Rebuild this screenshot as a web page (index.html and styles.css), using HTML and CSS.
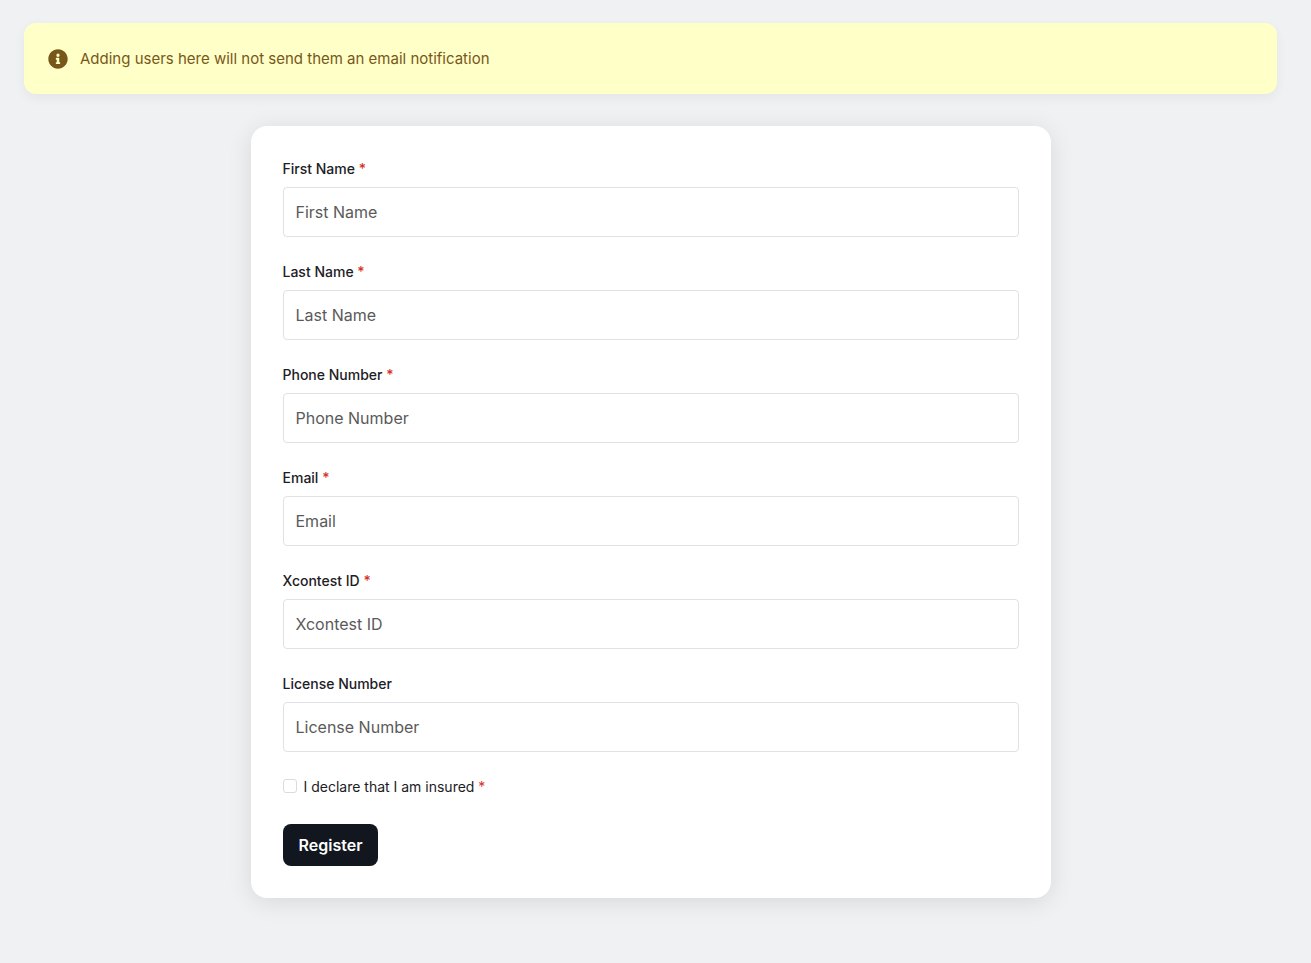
FILE: index.html
```html
<!doctype html>
<html lang="en">
<head>
<meta charset="utf-8">
<title>Register user</title>
<link rel="stylesheet" href="styles.css">
</head>

<body>

<div class="notice">
	<svg class="notice-icon" viewBox="0 0 512 512" aria-hidden="true">
		<path fill="currentColor" d="M256 8C119 8 8 119 8 256s111 248 248 248 248-111 248-248S393 8 256 8zm0 110a42 42 0 1 1 0 84 42 42 0 0 1 0-84zm56 254c0 6.600-5.400 12-12 12h-88c-6.600 0-12-5.400-12-12v-24c0-6.600 5.400-12 12-12h12v-64h-12c-6.600 0-12-5.400-12-12v-24c0-6.600 5.400-12 12-12h64c6.600 0 12 5.400 12 12v100h12c6.600 0 12 5.400 12 12v24z"/>
	</svg>
	<p>Adding users here will not send them an email notification</p>
</div>

<form class="card">
	<div class="field">
		<label for="first-name">First Name <span class="required">*</span></label>
		<input type="text" id="first-name" placeholder="First Name" required>
	</div>
	<div class="field">
		<label for="last-name">Last Name <span class="required">*</span></label>
		<input type="text" id="last-name" placeholder="Last Name" required>
	</div>
	<div class="field">
		<label for="phone">Phone Number <span class="required">*</span></label>
		<input type="tel" id="phone" placeholder="Phone Number" required>
	</div>
	<div class="field">
		<label for="email">Email <span class="required">*</span></label>
		<input type="email" id="email" placeholder="Email" required>
	</div>
	<div class="field">
		<label for="xcontest">Xcontest ID <span class="required">*</span></label>
		<input type="text" id="xcontest" placeholder="Xcontest ID" required>
	</div>
	<div class="field">
		<label for="license">License Number</label>
		<input type="text" id="license" placeholder="License Number">
	</div>
	<div class="check">
		<input type="checkbox" id="insured" required>
		<label for="insured">I declare that I am insured <span class="required">*</span></label>
	</div>
	<button type="submit" class="btn">Register</button>
</form>

</body>
</html>
```
FILE: styles.css
```css
*{ margin:0; padding:0; box-sizing:border-box;}
body{ padding:23px 34px 32px 24px; background:#f0f1f3; color:#1c2024; font-family:Inter,"Liberation Sans",sans-serif; font-size:14px;}

.notice{ display:flex; align-items:center; gap:12px; padding:24px; margin-bottom:32px; border-radius:12px; background:#ffffc8; color:#77581a; font-size:15px; line-height:23px; box-shadow:0 4px 12px rgba(0,0,0,.05);}
.notice-icon{ width:20px; height:20px; flex-shrink:0;}

.card{ display:flex; flex-direction:column; gap:24px; max-width:800px; margin:0 auto; padding:32px; border-radius:16px; background:#fff; box-shadow:0 4px 24px rgba(0,0,0,.1);}
.field{ display:flex; flex-direction:column; gap:8px;}
.field label{ font-weight:500; line-height:21px;}
.field input{ width:100%; height:50px; padding:0 12px; border:1px solid #e0e1e6; border-radius:4px; background:#fff; color:#1c2024; font-family:inherit; font-size:16px;}
.field input::placeholder{ color:#5a5a5a; opacity:1;}
.required{ color:#d93025;}

.check{ display:flex; align-items:flex-start; gap:7px; padding-bottom:2px;}
.check input{ appearance:none; width:14px; height:14px; margin-top:3px; border:1px solid #d9dbe3; border-radius:3px; background:#fff;}
.check input:checked{ background:#12161f;}
.check label{ line-height:22px;}

.btn{ align-self:flex-start; height:42px; padding:0 16px; border:0; border-radius:8px; background:#12161f; color:#fff; font-family:inherit; font-size:16px; font-weight:600; cursor:pointer;}
```
